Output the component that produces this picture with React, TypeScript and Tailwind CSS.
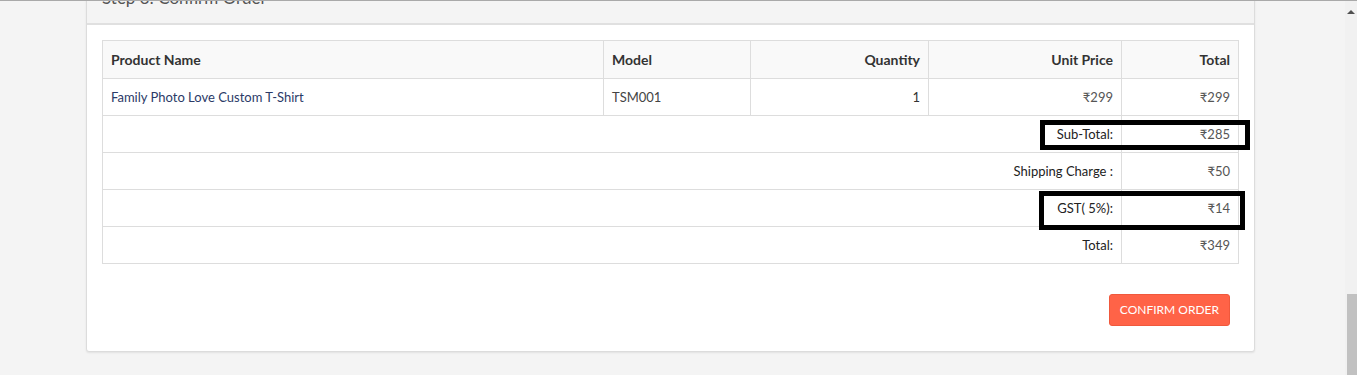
const rows = [
  { name: "Family Photo Love Custom T-Shirt", model: "TSM001", qty: "1", price: "₹299", total: "₹299" },
];

const totals = [
  { label: "Sub-Total:", value: "₹285", box: "right-[-129px] top-[4px] w-[210px] h-[30px]" },
  { label: "Shipping Charge :", value: "₹50", box: "" },
  { label: "GST( 5%):", value: "₹14", box: "right-[-124px] top-[1px] w-[206px] h-[39px]" },
  { label: "Total:", value: "₹349", box: "" },
];

export default function App() {
  return (
    <div className="h-[375px] overflow-hidden flex bg-[#f4f4f4] border-t border-[#a9a9a9] text-[13px] text-[#333]" style={{ fontFamily: "Lato, 'Open Sans', sans-serif" }}>
      <div className="flex-1 pl-[86px] pr-[90px]">
        <div className="bg-white border border-[#dcdcdc] rounded-b-[3px] shadow-[0_1px_2px_rgba(0,0,0,0.08)] -mt-[26px]">
          <div className="h-[49px] bg-[#f4f4f4] border-b-2 border-[#e0e0e0] px-[15px] pt-[9px] text-[17px] text-[#555]">
            Step 3: Confirm Order
          </div>
          <div className="px-[15px] pt-[15px] pb-[25px]">
            <table className="w-full table-fixed border-collapse">
              <colgroup>
                <col className="w-[501px]" />
                <col className="w-[147px]" />
                <col className="w-[178px]" />
                <col className="w-[193px]" />
                <col />
              </colgroup>
              <thead>
                <tr className="h-[38px] bg-[#f9f9f9] font-bold text-[14px] text-[#333]">
                  <td className="border border-[#ddd] px-2">Product Name</td>
                  <td className="border border-[#ddd] px-2">Model</td>
                  <td className="border border-[#ddd] px-2 text-right">Quantity</td>
                  <td className="border border-[#ddd] px-2 text-right">Unit Price</td>
                  <td className="border border-[#ddd] px-2 text-right">Total</td>
                </tr>
              </thead>
              <tbody>
                {rows.map((r) => (
                  <tr key={r.model} className="h-[37px]">
                    <td className="border border-[#ddd] px-2 pt-[2px] text-[#2b3a67]">{r.name}</td>
                    <td className="border border-[#ddd] px-2 pt-[2px] text-[#444]">{r.model}</td>
                    <td className="border border-[#ddd] px-2 pt-[2px] text-right">{r.qty}</td>
                    <td className="border border-[#ddd] px-2 pt-[2px] text-right text-[#555]">{r.price}</td>
                    <td className="border border-[#ddd] px-2 pt-[2px] text-right text-[#555]">{r.total}</td>
                  </tr>
                ))}
                {totals.map((t) => (
                  <tr key={t.label} className="h-[37px]">
                    <td colSpan={4} className="border border-[#ddd] px-2 pt-[2px] text-right text-[#222] relative">
                      {t.label}
                      {t.box && (
                        <span className={`absolute border-[5px] border-black pointer-events-none ${t.box}`} />
                      )}
                    </td>
                    <td className="border border-[#ddd] px-2 pt-[2px] text-right text-[#555]">{t.value}</td>
                  </tr>
                ))}
              </tbody>
            </table>
            <div className="flex justify-end mt-[30px] pr-[9px]">
              <button className="h-[32px] px-[10px] bg-[#ff6347] border border-[#f0583c] rounded-[3px] text-white text-[12px]">
                CONFIRM ORDER
              </button>
            </div>
          </div>
        </div>
      </div>
      <div className="w-[12px] bg-[#f1f1f1] flex flex-col">
        <div className="h-[293px] flex justify-center pt-[9px]">
          <div className="w-0 h-0 border-l-[4px] border-r-[4px] border-b-[4px] border-l-transparent border-r-transparent border-b-[#505050]" />
        </div>
        <div className="flex-1 ml-[2px] bg-[#c1c1c1]" />
      </div>
    </div>
  );
}
